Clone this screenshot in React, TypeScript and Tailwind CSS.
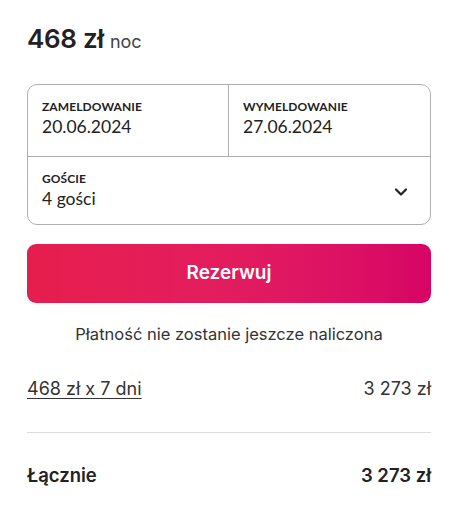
import { ChevronDown } from "lucide-react"

const lato = { fontFamily: "Lato, 'Noto Sans', sans-serif" }

function Field({ label, value }: { label: string; value: string }) {
  return (
    <div>
      <div className="text-[12px] font-bold uppercase leading-[16px] tracking-[0.1px]" style={lato}>{label}</div>
      <div className="text-[17.5px] leading-[24px] text-[#222]" style={lato}>{value}</div>
    </div>
  )
}

export default function App() {
  return (
    <div className="min-h-screen bg-white px-[27px] pt-[19px] text-[#222222]" style={{ fontFamily: "Inter, 'Noto Sans', sans-serif" }}>
      <div className="flex items-baseline gap-[6px]">
        <span className="text-[26px] font-semibold tracking-[-0.3px]">468 zł</span>
        <span className="text-[18px] text-[#444]">noc</span>
      </div>

      <div className="mt-[26px] rounded-[10px] border border-[#b0b0b0]">
        <div className="grid grid-cols-2 border-b border-[#b0b0b0]">
          <div className="h-[71px] px-[14px] pt-[14px] border-r border-[#b0b0b0]">
            <Field label="Zameldowanie" value="20.06.2024" />
          </div>
          <div className="h-[71px] px-[14px] pt-[14px]">
            <Field label="Wymeldowanie" value="27.06.2024" />
          </div>
        </div>
        <div className="flex h-[67px] items-start justify-between px-[14px] pt-[14px]">
          <Field label="Goście" value="4 gości" />
          <ChevronDown className="mt-[11px] mr-[5px] h-[20px] w-[20px]" strokeWidth={2.6} />
        </div>
      </div>

      <button className="mt-[19px] flex h-[59px] w-full items-center justify-center rounded-[9px] bg-gradient-to-r from-[#e61e4d] via-[#e31c5f] to-[#d70466] text-[19px] font-semibold text-white">
        Rezerwuj
      </button>

      <p className="mt-[19px] text-center text-[16.5px] text-[#333]">Płatność nie zostanie jeszcze naliczona</p>

      <div className="mt-[28px] flex items-center justify-between text-[18px] text-[#333]">
        <span className="underline underline-offset-[3px] decoration-[1px]">468 zł x 7 dni</span>
        <span>3 273 zł</span>
      </div>

      <div className="mt-[30px] border-t border-[#dddddd]" />

      <div className="mt-[29px] flex items-center justify-between text-[18.5px] font-semibold">
        <span>Łącznie</span>
        <span>3 273 zł</span>
      </div>
    </div>
  )
}
